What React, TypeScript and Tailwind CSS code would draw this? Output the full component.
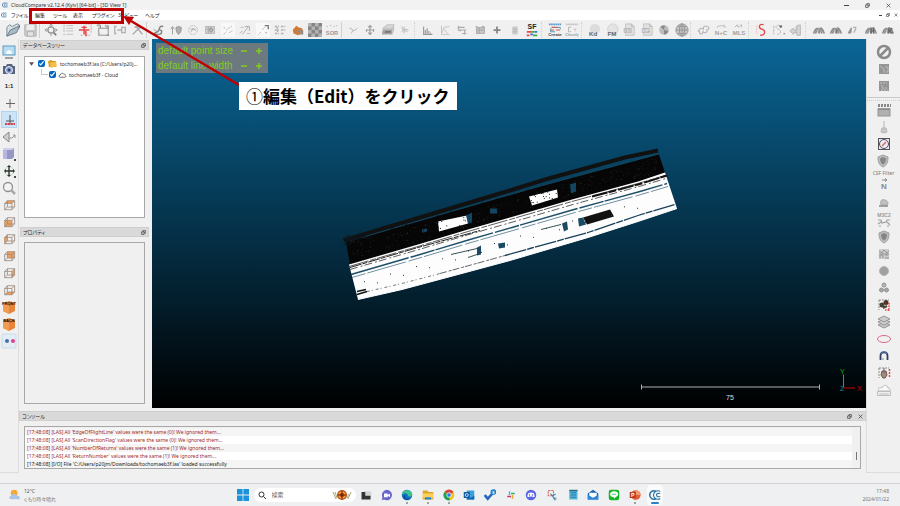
import type { ReactNode } from 'react';
import clsx from 'clsx';

const uiFont = "font-['Noto_Sans','Noto_Sans_CJK_JP',sans-serif]";

const G = '#949494';
const L = '#bdbdbd';

function Glyph({ children, className = 'w-4 h-4' }: { children: ReactNode; className?: string }) {
  return (
    <svg viewBox="0 0 16 16" className={clsx('shrink-0', className)} fill="none" stroke={G} strokeWidth="1" aria-hidden="true">
      {children}
    </svg>
  );
}

function Label({ x = 8, y, size, fill = '#777', children }: { x?: number; y: number; size: number; fill?: string; children: ReactNode }) {
  return (
    <text x={x} y={y} fontSize={size} fill={fill} stroke="none" textAnchor="middle" fontWeight="700" fontFamily="Liberation Sans, sans-serif">
      {children}
    </text>
  );
}

interface Tool {
  name: string;
  icon: ReactNode;
  active?: boolean;
  caption?: string;
}

const pageIcon = (text: string) => (
  <>
    <path d="M4 1h7l3 3v10H4z" fill="#e0e0e0" stroke="#c4c4c4" />
    <path d="M11 1v3h3" stroke="#b5b5b5" />
    <rect x="2" y="6" width="9" height="5" fill="#adadad" stroke="none" />
    <Label x={6.5} y={10} size={4} fill="#eee">{text}</Label>
  </>
);

const ridge = (extra: ReactNode) => (
  <>
    <path d="M1 12C3 5 6 5 8 6c3-3 5 1 7 6h-2l-1-3v3h-2V8l-1 4H7V7l-2 5z" fill="#8a8a8a" stroke="none" />
    <path d="M2 12l5-6M5 12l4-6M9 6l4 6" stroke="#bbb" strokeWidth=".7" />
    {extra}
  </>
);

const cloudPath = 'M4 11C1 11 1 7 4 7c0-3 4-4 6-2 3 0 3 3 3 3 2 1 1 3-1 3z';

const toolGroups: { grow: string; wideGap?: boolean; tools: Tool[] }[] = [
  {
    grow: 'flex-[2]',
    tools: [
      {
        name: 'Open',
        icon: (
          <>
            <path d="M1 15V5l3-3 3 2 6-3 2 1v4" fill="#d9e2e6" stroke="#6d8089" />
            <path d="M1 15L5 8l11-5-4 8z" fill="#a9bcc5" stroke="#5d727d" />
          </>
        ),
      },
      {
        name: 'Save',
        icon: (
          <>
            <path d="M2 2h13v13H3l-1-1z" fill="#c9c9c9" stroke="#b0b0b0" />
            <rect x="4" y="2" width="9" height="6" fill="#ededed" stroke="none" />
            <rect x="5" y="10" width="7" height="5" fill="#e4e4e4" stroke="#b0b0b0" />
          </>
        ),
      },
    ],
  },
  {
    grow: 'flex-[6]',
    tools: [
      {
        name: 'Apply transformation',
        icon: (
          <>
            <circle cx="8" cy="8" r="3.500" strokeWidth="1.500" />
            <path d="M8 1v4M8 11v4M1 8h4M11 8h4M6 3l2-2 2 2M3 6L1 8l2 2M13 6l2 2-2 2" />
            <path d="M11 11l3 3" stroke="#777" strokeWidth="2" />
          </>
        ),
      },
      {
        name: 'Point list',
        icon: (
          <>
            <path d="M6 3h8M6 6h8M6 9h8M6 13h8" stroke={L} />
            <path d="M3 3h1M3 6h1M3 9h1M3 13h1" strokeWidth="2" stroke="#a5a5a5" />
          </>
        ),
      },
      {
        name: 'Register',
        icon: (
          <>
            <path d="M8 1h7v10M5 14H2M9 14h5" stroke="#c99" strokeDasharray="2 1" />
            <path d="M7 3v10M1 8h12M4 5h6M9 9v6" stroke="#e5484a" strokeWidth="1.700" />
          </>
        ),
      },
      {
        name: 'Clone',
        icon: (
          <>
            <rect x="3" y="6" width="11" height="8" stroke="#aaa" strokeWidth="1.500" />
            <path d="M1 3h4v3M11 4h3v3M12 14h3" strokeWidth="1.500" />
            <path d="M1 2h4M10 3h4M2 12h3" stroke={L} strokeWidth="2" />
          </>
        ),
      },
      { name: 'Merge', icon: <path d="M4 4H2v8h2M5 8h5M10 5h4v6h-4z" strokeWidth="1.500" stroke="#b0b0b0" /> },
      { name: 'Delete', icon: <path d="M2 13L11 4M6 4l7 9M4 5c4-2 4-2 8 1" strokeWidth="1.500" stroke="#a5a5a5" /> },
    ],
  },
  {
    grow: 'flex-[11]',
    tools: [
      {
        name: 'Sample points',
        icon: (
          <>
            <path d="M3 13c2-4 5-1 6-5s2-5 5-4M2 13h8c3-1 3-5 0-5" stroke="#858585" strokeWidth="1.700" />
            <path d="M3 7l4 3" stroke={G} />
          </>
        ),
      },
      {
        name: 'Normals',
        icon: (
          <>
            <path d="M4 13V5M2 7l2-3 2 3" />
            <path d="M8 5l3-1 3 1c0 5-1 6-3 8-2-2-3-3-3-8z" fill="#b0b0b0" />
          </>
        ),
      },
      {
        name: 'Octree',
        icon: (
          <>
            <circle cx="8" cy="8" r="5" stroke="#b5b5b5" strokeDasharray="2 1" />
            <path d="M6 10l2-4 3 3M5 7h6" stroke="#aaa" />
          </>
        ),
      },
      {
        name: 'Mesh',
        icon: (
          <>
            <rect x="3" y="4" width="10" height="8" fill="#d0d0d0" stroke="#b5b5b5" />
            <path d="M6 4v8M9 4v8M4 7h8" stroke="#aaa" />
            <circle cx="9" cy="8" r="2" />
          </>
        ),
      },
      {
        name: 'Cloud to cloud',
        icon: (
          <>
            <rect x="0" y="0" width="16" height="16" fill="#f8f8f8" stroke="none" />
            <path d="M3 13l3-3M6 8l7-5M9 11l4-2M3 5l2 1" stroke="#aaa" strokeDasharray="2 1" />
          </>
        ),
      },
      {
        name: 'Cloud to mesh',
        icon: (
          <>
            <path d="M2 12l3-3M5 13l7-9M8 4h5v5" stroke="#a5a5a5" />
            <path d="M3 5h4M10 12h4" stroke={L} />
          </>
        ),
      },
      {
        name: 'Align',
        icon: (
          <>
            <rect x="-2" y="-2" width="20" height="20" fill="#f9f9f9" stroke="none" />
            <path d="M2 14l4-4M7 8l4-4" strokeDasharray="1 1" />
            <path d="M10 3h4v4M11 11h1" stroke="#777" strokeWidth="1.500" />
          </>
        ),
      },
      { name: 'Statistics', icon: <path d="M2 4h5M2 8h4M2 12h5M4 4l2 4-2 4M9 4h5M9 8h5M9 12h4" stroke="#b0b0b0" strokeDasharray="3 1" strokeWidth="1.500" /> },
      {
        name: 'Label components',
        icon: (
          <>
            <path d="M2 8l4-5 3 2 4 1v5l-5 3-5-2z" fill="#cf7a39" stroke="none" />
            <path d="M8 8h6v5H9z" fill="#9c8a7c" stroke="none" />
          </>
        ),
      },
      {
        name: 'Segment',
        icon: (
          <>
            <rect width="16" height="16" fill="#b4b4b4" stroke="none" />
            <path d="M4 0h4v4H4zM12 0h4v4h-4zM0 4h4v4H0zM8 4h4v4H8zM4 8h4v4H4zM12 8h4v4h-4zM0 12h4v4H0zM8 12h4v4H8z" fill="#858585" stroke="none" />
          </>
        ),
      },
      {
        name: 'SOR filter',
        icon: (
          <>
            <path d="M2 4h1M6 3h1M10 4h1M13 3h1" />
            <Label y={14} size={6.5} fill="#999">SOR</Label>
          </>
        ),
      },
    ],
  },
  {
    grow: 'flex-[4]',
    tools: [
      { name: 'Cut', icon: <path d="M5 6l4 3 4-3M8 8l-2 4M4 6h2" stroke="#b0b0b0" /> },
      { name: 'Translate', icon: <path d="M8 3v10M4 8h9M6 5l2-2 2 2M6 11l2 2 2-2M4 7v3M12 7v3" stroke="#999" strokeWidth="1.300" /> },
      {
        name: 'Cross section',
        icon: (
          <>
            <path d="M2 6l5-4h8l-2 4z" fill="#d8d8d8" stroke="#bbb" />
            <path d="M2 7h11v6H1z" fill="#a5a5a5" stroke="none" />
            <path d="M13 6l2-4v6l-2 5z" fill="#bdbdbd" stroke="none" />
            <path d="M5 9h6v2H4z" fill="#757575" stroke="none" />
          </>
        ),
      },
      { name: 'Trace', icon: <path d="M4 4l2 4 5 2M7 4v8M4 10l4-3 4 1" stroke="#b5b5b5" /> },
    ],
  },
  {
    grow: 'flex-[7]',
    wideGap: true,
    tools: [
      { name: 'Histogram', icon: <path d="M3 4v9h10M5 12V8M7 12V6M9 12V9M11 12v-1" stroke="#999" strokeWidth="1.300" /> },
      { name: 'Curve', icon: <path d="M4 3v10h9M4 12l3-7 6-1M6 6l5 6" stroke="#c0c0c0" /> },
      { name: 'Filter range', icon: <path d="M3 5h8M3 8h10M8 12h5M4 3v4M11 8v5M4 8l3 1" stroke="#aaa" strokeWidth="1.300" /> },
      {
        name: 'Scalar grid',
        icon: (
          <>
            <rect x="4" y="5" width="9" height="7" fill="#c5c5c5" stroke="#aaa" />
            <path d="M3 4h2M10 4h3M7 5v7M4 8h9" stroke="#a5a5a5" />
          </>
        ),
      },
      { name: 'Add scalar field', icon: <path d="M8 4v8M4 8h8" stroke="#858585" strokeWidth="2" /> },
      { name: 'Remove scalar field', icon: <><rect x="5" y="4" width="6" height="9" fill="#cacaca" stroke="none" /><path d="M5 7h6M5 10h6" stroke="#b5b5b5" /></> },
      {
        name: 'Scalar field arithmetic',
        icon: (
          <>
            <Label y={7} size={8} fill="#222">SF</Label>
            <path d="M2 10h5M2 14h3" stroke="#e34b3f" strokeWidth="2" />
            <path d="M7 10h4M9 14h5" stroke="#3fae4a" strokeWidth="2" />
            <path d="M11 10h3M6 13h3" stroke="#3277cc" strokeWidth="2" />
          </>
        ),
      },
    ],
  },
  {
    grow: 'flex-[2]',
    wideGap: true,
    tools: [
      {
        name: 'Canupo create',
        icon: (
          <>
            <path d="M1 1.500h14" stroke="#5a9cd0" strokeWidth="2" strokeDasharray="2 .5" />
            <path d="M4 5h7M3 8h4M9 8h5" stroke="#cc5e55" strokeWidth="1.300" />
            <path d="M3 6v4h5M10 5h4v2" stroke="#4b8cae" />
            <Label y={15} size={5} fill="#444">Create</Label>
          </>
        ),
      },
      {
        name: 'Canupo classify',
        icon: (
          <>
            <path d="M1 1.500h14" stroke="#c4c4c4" strokeWidth="2" strokeDasharray="2 .5" />
            <path d="M4 5h3M4 5v5h3M10 7h3M11 9h1" stroke="#b0b0b0" />
            <Label y={15} size={4} fill="#999">Classify</Label>
          </>
        ),
      },
    ],
  },
  {
    grow: 'flex-[6]',
    wideGap: true,
    tools: [
      { name: 'Kd', icon: <><circle cx="9" cy="7" r="6" fill="#dcdcdc" stroke="none" /><Label x={7} y={15} size={7} fill="#666">Kd</Label></> },
      { name: 'FM', icon: <><circle cx="9" cy="7" r="6" fill="#e3e3e3" stroke="#d0d0d0" /><Label x={8} y={15} size={7} fill="#666">FM</Label></> },
      { name: 'Export CSV', icon: pageIcon('CSV') },
      { name: 'Import CSV', icon: pageIcon('SHP') },
      {
        name: 'Facets',
        icon: (
          <>
            <circle cx="8" cy="8" r="5.500" fill="#bdbdbd" stroke="none" />
            <path d="M8 8L4 4c3-2 5-1 5-1zM8 8l5 1c-1 3-3 4-5 4z" fill="#888" stroke="none" />
          </>
        ),
      },
      {
        name: 'Stereogram',
        icon: (
          <>
            <circle cx="8" cy="8" r="7" fill="#c5c5c5" />
            <ellipse cx="8" cy="8" rx="3" ry="7" />
            <path d="M8 1v14M1 8h14M3 4h10M3 12h10" />
          </>
        ),
      },
    ],
  },
  {
    grow: 'flex-[3]',
    wideGap: true,
    tools: [
      { name: 'HPR', icon: <path d="M3 8c0-3 3-2 4-1 0-4 3-4 4-3 4 0 3 4 0 4 2 3-3 4-4 2-1 4-5 3-4 0-2 0-2-2 0-2z" stroke="#b5b5b5" strokeWidth="1.300" /> },
      { name: 'Normals and curvature', icon: <><path d="M3 5c4-3 8-2 10 0M11 2l2 3" stroke="#b5b5b5" /><Label y={14} size={7} fill="#a0a0a0">N+C</Label></> },
      { name: 'MLS', icon: <><path d="M3 5l3-3 1 3 4-3v3" stroke="#b5b5b5" /><Label y={14} size={7} fill="#a0a0a0">MLS</Label></> },
    ],
  },
  {
    grow: 'flex-[3]',
    wideGap: true,
    tools: [
      {
        name: 'Polyline',
        icon: (
          <>
            <path d="M11 2C5 0 5 6 9 7s5 7-2 7" stroke="#e04a4a" strokeWidth="1.500" />
            <path d="M3 3v10" stroke="#e99" strokeDasharray="1 1" />
          </>
        ),
      },
      {
        name: 'Rasterize contour',
        icon: (
          <>
            <path d="M9 3C4 1 3 6 7 7s4 6-1 6M2 3v10" stroke="#b0b0b0" strokeDasharray="3 1" />
            <circle cx="10" cy="4" r="1.500" fill="#666" stroke="none" />
            <circle cx="14" cy="12" r="1" fill="#999" stroke="none" />
          </>
        ),
      },
      { name: 'Unroll', icon: <path d="M1 9l4-3v2h4V3l4-1v12h-4v-3H5v2zM8 4v8" fill="#d5d5d5" stroke="#b5b5b5" /> },
    ],
  },
  {
    grow: 'flex-[5]',
    wideGap: true,
    tools: [
      { name: 'Ridge view', icon: ridge(null) },
      { name: 'Ridge section', icon: ridge(<path d="M9 7v5" stroke="#666" />) },
      { name: 'Ridge query', icon: <><path d="M2 12C4 6 6 5 7 5l-1 7z" fill={G} stroke="none" /><path d="M8 5h3v2l-2 4" stroke="#b0b0b0" strokeWidth="1.500" /></> },
      { name: 'Ridge H', icon: ridge(<path d="M8 5v7M11 5v7M8 9h3" stroke="#666" strokeWidth="1.500" />) },
      { name: 'Ridge K', icon: ridge(<path d="M9 5v7M13 6l-3 3 3 3" stroke="#666" strokeWidth="1.500" />) },
    ],
  },
];

type Face = 'top' | 'front' | 'left' | 'back' | 'right' | 'bottom';

const facePaths: Record<Face, string> = {
  top: 'M3 6l3-3h8l-3 3z',
  front: 'M3 6h8v7H3z',
  left: 'M3 6l3-3v7l-3 3z',
  back: 'M6 3h8v7H6z',
  right: 'M11 6l3-3v7l-3 3z',
  bottom: 'M3 13l3-3h8l-3 3z',
};

const cube = (face: Face) => (
  <g transform="translate(1 1) scale(.9)">
    <path d={facePaths[face]} fill="#f0a05a" stroke="none" />
    <path d="M3 6h8v7H3zM6 3h8v7H6zM3 6l3-3M11 6l3-3M3 13l3-3M11 13l3-3" stroke="#9a8a7e" strokeWidth=".9" />
  </g>
);

const isoBox = (text: string) => (
  <>
    <path d="M2 4l6-2 6 2v8l-6 3-6-3z" fill="#e9853a" stroke="none" />
    <path d="M2 4l6 3v8l-6-3z" fill="#f39b55" stroke="none" />
    <path d="M8 7l6-3" stroke="#b96423" strokeWidth=".6" />
    <Label y={5.5} size={4} fill="#111">{text}</Label>
  </>
);

const viewTools: Tool[] = [
  {
    name: 'Display settings',
    icon: (
      <>
        <rect x="2" y="2" width="12" height="9" fill="#b8ddf0" stroke="#5a9cc0" />
        <path d="M5 10c0-5 6-5 6 0z" fill="#f6fbfd" stroke="none" />
        <path d="M4 14h8" stroke="#888" strokeWidth="1.500" />
      </>
    ),
  },
  {
    name: 'Snapshot',
    icon: (
      <>
        <path d="M2 5h3l1-2h5l1 2h2v8H2z" fill="#59647c" stroke="none" />
        <circle cx="8" cy="9" r="3.500" fill="#8ba2d4" stroke="#e3e8f2" />
        <circle cx="8" cy="9" r="1.500" fill="#34416a" stroke="none" />
      </>
    ),
  },
  { name: 'Zoom 1:1', icon: <Label y={10} size={6} fill="#222">1:1</Label> },
  { name: 'Set pivot', icon: <path d="M9 4v9M5 8.500h9" stroke="#666" /> },
  {
    name: 'Auto pivot',
    active: true,
    icon: (
      <>
        <path d="M9 3v9M5 9h8" stroke="#555" />
        <path d="M4 12h10" stroke="#d2495a" strokeWidth="2" strokeDasharray="2.500 .4" />
      </>
    ),
  },
  { name: 'Level', icon: <><path d="M2 8l6-5v10z" fill="#cfcfcf" stroke="#888" /><path d="M8 9h3l3-3M12 6h2v3" /></> },
  {
    name: 'Perspective',
    icon: (
      <>
        <path d="M2 3l3-1h8v9l-2 2H2z" fill="#9797c6" stroke="none" />
        <path d="M2 3l3-1h8l-2 2H2z" fill="#d0d0ee" stroke="none" />
        <path d="M2 4h4v9H2z" fill="#b6b6df" stroke="none" />
        <path d="M14 13v2" stroke="#111" strokeWidth="1.500" />
      </>
    ),
  },
  {
    name: 'Rotation mode',
    icon: (
      <>
        <circle cx="8" cy="8" r="4.500" stroke="#b9dfc6" />
        <path d="M8 4v8M4 8h8" stroke="#333" strokeWidth="1.400" />
        <path d="M8 2l2 2H6zM8 14l2-2H6zM3 8l2-2v4zM14 8l-2-2v4z" fill="#333" stroke="none" />
        <path d="M14 13v2" stroke="#111" strokeWidth="1.500" />
      </>
    ),
  },
  { name: 'Zoom', icon: <><circle cx="7" cy="7" r="4.500" fill="#f3f3f3" stroke="#909090" strokeWidth="1.300" /><path d="M10 10l4 4" stroke="#aaa" strokeWidth="2.500" /></> },
  { name: 'Top view', icon: cube('top') },
  { name: 'Front view', icon: cube('front') },
  { name: 'Left view', icon: cube('left') },
  { name: 'Back view', icon: cube('back') },
  { name: 'Right view', icon: cube('right') },
  { name: 'Bottom view', icon: cube('bottom') },
  { name: 'Isometric front', icon: isoBox('FRONT') },
  { name: 'Isometric back', icon: isoBox('BACK') },
  {
    name: 'Stereo mode',
    icon: (
      <>
        <rect x="1" y="1" width="14" height="14" rx="1" fill="#e2edf5" stroke="#c9dbe8" />
        <circle cx="6" cy="8" r="2" fill="#4a6fa8" stroke="none" />
        <circle cx="12" cy="8" r="2" fill="#e0408c" stroke="none" />
      </>
    ),
  },
];

const shaderTools: Tool[] = [
  { name: 'No filter', icon: <><circle cx="8" cy="8" r="6" strokeWidth="2.500" stroke="#8a8a8a" /><path d="M4.500 11.500l7-7" strokeWidth="2.500" stroke="#8a8a8a" /></> },
  { name: 'EDL shader', icon: <><rect x="3" y="3" width="10" height="10" fill="#959595" stroke="none" /><path d="M4 5l4 3v4M9 6h3v5h-2" stroke="#bdbdbd" /></> },
  { name: 'SSAO shader', icon: <><rect x="3" y="3" width="10" height="10" fill="#959595" stroke="none" /><path d="M4 5h7M6 7v3h5M5 12h7" stroke="#c4c4c4" strokeDasharray="2 1" /></> },
];

const shield = (
  <>
    <path d="M8 2l5 2c0 5-1 8-5 10-4-2-5-5-5-10z" fill="#bbb" stroke="#a0a0a0" />
    <path d="M8 4l3 1.500c0 3-1 5-3 6-2-1-3-3-3-6z" fill="#858585" stroke="none" />
  </>
);

const frame = <path d="M3 3h10M3 3v10" stroke="#888" strokeDasharray="2 1" />;

const pluginTools: Tool[] = [
  {
    name: 'Animation',
    icon: (
      <>
        <rect x="2" y="7" width="12" height="7" fill="#b0b0b0" />
        <path d="M2 3.500h13" stroke="#888" strokeWidth="3" strokeDasharray="2 1" />
        <path d="M2 7h12" stroke="#777" />
      </>
    ),
  },
  { name: 'Broom', icon: <><path d="M8 2v7" stroke="#b5b5b5" /><path d="M6 9h4l1 4-4 1-2-1z" fill="#c9c9c9" stroke="#b5b5b5" /></> },
  { name: 'Compass', icon: <><rect x="2.500" y="2.500" width="11" height="11" fill="#eceaf2" stroke="#555" /><circle cx="8" cy="8" r="4.500" stroke="#544b63" /><path d="M6 10l4-4" stroke="#cf6a4b" strokeWidth="1.300" /></> },
  { name: 'CSF Filter', icon: shield, caption: 'CSF Filter' },
  { name: 'Hough normals', icon: <><path d="M6 2h5M9 .5L11 2 9 3.500" stroke="#888" /><Label y={11} size={8} fill="#888">N</Label></> },
  { name: 'Masonry', icon: <><path d="M5 10c-1-5 1-6 4-5s4 4 2 5z" fill="#c0c0c0" stroke="#aaa" /><path d="M3 11h9" stroke="#888" strokeWidth="1.500" /></> },
  { name: 'M3C2', icon: <><Label y={5} size={5} fill="#999">M3C2</Label><path d="M2 8h3l1 3 4-1 1-2h3M2 12l3-2M11 10l3 3M3 14h2M11 14h2" stroke="#a0a0a0" strokeWidth="1.200" /></> },
  { name: 'PCV', icon: shield },
  { name: 'Poisson', icon: <><rect x="3" y="3" width="10" height="10" fill="#ccc" stroke="none" /><path d="M3 5l3 2 2-3 3 3 2-2M4 12V9h3v3M9 9h3M9 12h4M3 8h10" /></> },
  { name: 'RANSAC', icon: <circle cx="8" cy="8" r="4.500" fill="#a0a0a0" stroke="#b5b5b5" /> },
  { name: 'SRA', icon: <><circle cx="8" cy="5" r="2" fill="#b5b5b5" /><circle cx="5.500" cy="10" r="2" fill="#a5a5a5" /><circle cx="10.500" cy="10" r="2" fill="#a5a5a5" /></> },
  {
    name: 'Tree segmentation',
    icon: (
      <>
        {frame}
        <circle cx="10" cy="5.500" r="2.500" fill="#54342a" stroke="none" />
        <circle cx="6" cy="8" r="2.500" fill="#443" stroke="none" />
        <path d="M7 11l4-2" stroke="#543" strokeWidth="2" />
        <path d="M13 6v8M9 13h5" stroke="#e04545" strokeDasharray="1.500 1" strokeWidth="1.500" />
      </>
    ),
  },
  { name: 'Layers', icon: <><path d="M2 11l6 3 6-3-6-3z" fill="#c5c5c5" /><path d="M2 8l6 3 6-3-6-3z" fill="#d0d0d0" /><path d="M2 5l6 3 6-3-6-3z" fill="#ccc" /></> },
  { name: 'Ellipse fit', icon: <ellipse cx="8" cy="8" rx="6.500" ry="3.500" stroke="#d9697f" /> },
  { name: 'Magnet', icon: <><path d="M4.500 12V8c0-5 7-5 7 0v4" stroke="#343c5c" strokeWidth="1.800" /><path d="M5 6c1-3 5-3 6 0" stroke="#5f8fd8" /><path d="M7 10v2" stroke="#888" /></> },
  {
    name: 'Sensor',
    icon: (
      <>
        {frame}
        <path d="M6 6h4l1 4-2 3H7l-2-3z" fill="#a08c7e" stroke="#6d5548" />
        <path d="M8 3v5" stroke="#666" />
        <path d="M13.500 4v9" stroke="#e04545" strokeDasharray="2 1" strokeWidth="1.500" />
      </>
    ),
  },
  { name: 'Cloud layers', icon: <><path d="M3 9C1 5 5 5 6 6c1-4 6-3 6 0 3 0 2 3 2 3z" stroke="#bdbdbd" fill="#f7f7f7" /><path d="M1.500 9.500h13v4h-13zM3 12h10" stroke="#bdbdbd" /></> },
];

function ToolButton({ tool, size }: { tool: Tool; size?: string }) {
  return (
    <button
      type="button"
      aria-label={tool.name}
      className={clsx('flex flex-col items-center justify-center min-w-0', tool.active && 'bg-[#cce4f7] outline outline-1 -outline-offset-1 outline-[#b0d5f0]')}
    >
      <Glyph className={size}>{tool.icon}</Glyph>
    </button>
  );
}

function VerticalTool({ tool }: { tool: Tool }) {
  return (
    <div className="flex flex-col items-center shrink-0">
      <div className="h-[17px] w-[17px] flex justify-center">
        <ToolButton tool={tool} />
      </div>
      {tool.caption && <span className="h-2 leading-2 text-[5px] text-[#777] whitespace-nowrap">{tool.caption}</span>}
    </div>
  );
}

function RestoreIcon({ className }: { className: string }) {
  return (
    <svg viewBox="0 0 8 8" className={className} fill="none" stroke="#444" strokeWidth="1.200" aria-hidden="true">
      <path d="M1 3h4v4H1zM3 3V1h4v4H5" />
    </svg>
  );
}

function CloseIcon({ className }: { className: string }) {
  return (
    <svg viewBox="0 0 8 8" className={className} stroke="#444" strokeWidth="1.200" aria-hidden="true">
      <path d="M1 1l6 6M7 1L1 7" />
    </svg>
  );
}

function AppLogo({ className }: { className: string }) {
  return (
    <svg viewBox="0 0 16 16" className={className} fill="none" stroke="#2b6f9e" strokeWidth="2" aria-hidden="true">
      <path d="M9 3C5 1 1 4 1 8s4 7 8 5" />
      <path d="M15 3c-5-2-9 1-9 5s4 7 9 5M15 6c-3-1-5 0-5 2s2 3 5 2" strokeWidth="1.500" />
    </svg>
  );
}

function DockHeader({ title, closable }: { title: string; closable?: boolean }) {
  return (
    <div className="h-2.5 shrink-0 flex items-center gap-1 px-0.5 bg-[#d9d9d9] border border-[#cfcfcf]">
      <h2 className="flex-1 text-[5px] leading-2 text-[#222] [font-feature-settings:'palt']">{title}</h2>
      <button type="button" aria-label={`Float ${title}`}><RestoreIcon className="w-[5px] h-[5px]" /></button>
      {closable && (
        <button type="button" aria-label={`Close ${title}`} className="ml-0.5"><CloseIcon className="w-[5px] h-[5px]" /></button>
      )}
    </div>
  );
}

const menuItems = [
  { label: 'ファイル', width: 'w-6' },
  { label: '編集', width: 'w-[18px]' },
  { label: 'ツール', width: 'w-5' },
  { label: '表示', width: 'w-[19px]' },
  { label: 'プラグイン', width: 'w-[26px]' },
  { label: '3Dビュー', width: 'w-[27px]' },
  { label: 'ヘルプ', width: 'w-5' },
];

function TitleBar() {
  return (
    <>
      <header className="h-2.5 shrink-0 flex items-center pl-0.5 pr-[9px] bg-[#f2f2f2]">
        <AppLogo className="w-[6px] h-[6px] mr-[3px]" />
        <h1 className="flex-1 text-[5px] leading-2 text-[#333]">CloudCompare v2.12.4 (Kyiv) [64-bit] - [3D View 1]</h1>
        <div className="flex items-center gap-4">
          <button type="button" aria-label="Minimize"><span className="block w-[5px] h-px bg-[#444]" /></button>
          <button type="button" aria-label="Restore"><RestoreIcon className="w-[5px] h-[5px]" /></button>
          <button type="button" aria-label="Close"><CloseIcon className="w-[5px] h-[5px]" /></button>
        </div>
      </header>
      <nav className="h-2.5 shrink-0 flex items-center pl-px pr-0.5 bg-white">
        <AppLogo className="w-[6px] h-[6px] mr-1" />
        {menuItems.map(item => (
          <button
            key={item.label}
            type="button"
            className={clsx("text-left whitespace-nowrap text-[5px] leading-2 text-[#222] [font-feature-settings:'palt']", item.width)}
          >
            {item.label}
          </button>
        ))}
        <div className="ml-auto flex items-center gap-1">
          <button type="button" aria-label="Minimize view"><span className="block w-[3px] h-px bg-[#444]" /></button>
          <button type="button" aria-label="Restore view"><RestoreIcon className="w-1 h-1" /></button>
          <button type="button" aria-label="Close view"><CloseIcon className="w-1 h-1" /></button>
        </div>
      </nav>
    </>
  );
}

function MainToolbar() {
  return (
    <div role="toolbar" aria-label="Main tools" className="h-[19px] shrink-0 flex items-center pl-1 pr-[3px] bg-[#f0f0f0]">
      {toolGroups.map((group, i) => (
        <div key={group.grow + i} className="contents">
          {i > 0 && (
            <span className={clsx('h-4 shrink-0 border-l border-[#d0d0d0]', group.wideGap ? 'w-[5px] border-dotted' : 'w-[3px]')} />
          )}
          <div className={clsx('flex min-w-0', group.grow)}>
            {group.tools.map(tool => (
              <div key={tool.name} className="flex-1 min-w-0 flex justify-center">
                <ToolButton tool={tool} size="w-3.5 h-3.5" />
              </div>
            ))}
          </div>
        </div>
      ))}
    </div>
  );
}

function TreePanel() {
  return (
    <div className="w-[133px] shrink-0 flex flex-col pt-px pl-px pr-[3px] pb-1">
      <DockHeader title="データベースツリー" />
      <div className="flex-1 mt-1.5 mb-[9px] ml-1 mr-1 border border-[#a8a8a8] bg-white text-[5px] leading-2 text-[#333]">
        <div className="flex items-center pl-1 pt-px h-3">
          <svg viewBox="0 0 6 4" className="w-[5px] h-1 mr-1" aria-hidden="true"><path d="M0 0h6L3 4z" fill="#6a4a4a" /></svg>
          <input type="checkbox" defaultChecked id="node-file" className="w-[7px] h-[7px] accent-[#0067c0]" />
          <svg viewBox="0 0 10 9" className="w-[9px] h-2 mx-[3px]" aria-hidden="true">
            <path d="M0 1l4-1 1 1h4v7H1z" fill="#d9981e" />
            <path d="M2 3l7-1 1 5-7 2z" fill="#f5c04a" />
          </svg>
          <label htmlFor="node-file" className="whitespace-nowrap">tochomaeb3f.las (C:/Users/p20j...</label>
        </div>
        <div className="flex items-center pl-4 h-[11px]">
          <span className="w-[7px] h-1.5 -mt-1.5 mr-px border-l border-b border-[#c8c8c8]" />
          <input type="checkbox" defaultChecked id="node-cloud" className="w-[7px] h-[7px] accent-[#0067c0]" />
          <svg viewBox="0 0 16 14" className="w-[9px] h-2 mx-0.5" fill="#fff" stroke="#555" strokeWidth="1.500" aria-hidden="true">
            <path d={cloudPath} />
          </svg>
          <label htmlFor="node-cloud" className="whitespace-nowrap">tochomaeb3f - Cloud</label>
        </div>
      </div>
      <DockHeader title="プロパティ" />
      <div className="flex-1 mt-[5px] mx-1 border border-[#a8a8a8]" />
    </div>
  );
}

// small LCG so that the point scatter stays the same between renders
function scatter(count: number, seed: number) {
  let s = seed;
  const next = () => {
    s = (s * 1664525 + 1013904223) % 4294967296;
    return s / 4294967296;
  };
  return Array.from({ length: count }, () => ({ u: next(), v: next(), w: next() }));
}

// centre line between the dark and the bright half of the road
const seam = [[349, 264], [418, 244], [468, 229], [510, 217], [572, 199], [638, 181], [665, 173]];

function seamY(x: number) {
  for (let i = 1; i < seam.length; i++) {
    const [x0, y0] = seam[i - 1];
    const [x1, y1] = seam[i];
    if (x <= x1 || i === seam.length - 1) {
      return y0 + ((x - x0) / (x1 - x0)) * (y1 - y0);
    }
  }
  return seam[0][1];
}

function line(dx: number, dy: number) {
  return seam.map(([x, y]) => `${x + dx},${y + dy}`).join(' ');
}

function PointCloud() {
  const lowerEdge = '358,299 402,289 458,274 510,260 588,237 638,221 677,208';
  return (
    <svg viewBox="152 39 714 368" className="absolute inset-0 w-full h-full" fill="none" aria-label="Point cloud">
      <polygon points="346,242 400,226 470,206 540,186 600,170 659,154 665,172 638,182 572,200 510,218 468,229 418,244 350,264" fill="#060606" />
      <polyline points="344,240 370,232 430,214 510,190 545,179 585,168 625,157 658,150" stroke="#111" strokeWidth="4" />
      <polyline points="362,237 430,217 510,194 585,173 659,153" stroke="#174257" strokeWidth="1" strokeDasharray="30 3 12 2" />
      <polygon points="349,264 418,244 468,229 510,217 572,199 638,181 665,172 671,190 677,208 638,221 588,237 510,260 458,274 402,289 358,299" fill="#fdfdfd" />

      <polyline points={line(0, 2)} stroke="#333" strokeWidth=".8" strokeDasharray="20 2 6 1" />
      <polyline points={line(1, 5)} stroke="#333" strokeWidth=".8" strokeDasharray="8 3 2 2" />
      <polyline points="350,267 418,247 480,230" stroke="#222" strokeWidth="1" strokeDasharray="12 1 5 1" />
      <polyline points="592,196 638,184 667,175" stroke="#111" strokeWidth="2" strokeDasharray="16 1 8 2" />
      <polyline points={line(2, 10)} stroke="#1d4d68" strokeWidth="1.400" strokeDasharray="60 2 25 1" />
      <polyline points={line(3, 13)} stroke="#4b7388" strokeWidth=".8" strokeDasharray="14 2 40 3" />
      <polyline points="363,292 402,283 440,273" stroke="#777" strokeWidth="1" strokeDasharray="1 3 3 2" />
      <polyline points="440,273 480,262 505,255" stroke="#666" strokeWidth="1" strokeDasharray="7 2 3 1" />
      <polyline points="505,255 530,248 588,232 638,215 675,204" stroke="#153f59" strokeWidth="1.300" strokeDasharray="22 1 7 1" />
      <path d="M357 291l9-2M357 294l10-3" stroke="#111" strokeWidth="1.500" />
      <polyline points={lowerEdge} stroke="#fff" strokeWidth="1" />

      <path d="M438 221l29-6 1 8-29 8zM529 196l28-7 1 8-26 8z" fill="#fff" />
      <path d="M466 215l6-3v10l-4 1zM570 184l6-2v9l-5 2zM490 208h7v5h-7zM422 229l5-1v3l-5 1z" fill="#134663" />
      <path d="M583 217l27-8 4 7-27 8z" fill="#111" />
      <path d="M578 218l5-1 3 7-7 2zM562 223l5-2 1 8-4 2zM477 247l4-2v9l-4 1zM498 243l7-1v5l-6 1z" fill="#1c4a64" />
      <path d="M451 254l26-6M468 257l9-3M541 229l20-5" stroke="#355" strokeWidth="1" />

      {scatter(220, 7).map(({ u, v, w }, i) => {
        const x = 352 + u * 304;
        return <rect key={`d${i}`} x={x} y={seamY(x) - 4 - v * 15} width="1" height="1" fill={w > 0.7 ? '#332e2a' : '#1b1b1a'} />;
      })}
      {scatter(50, 21).map(({ u, v }, i) => (
        <rect key={`e${i}`} x={341 + u * 30} y={236 + v * 9 - u * 7} width="2" height="1" fill="#10181c" />
      ))}
      {Array.from({ length: 22 }, (_, i) => {
        const x = 364 + i * 13;
        return <rect key={`w${i}`} x={x} y={seamY(x) + 21 + (i % 2) * 5} width="1" height="1" fill="#333" />;
      })}

      <path d="M641.500 384v5M641 386.500h178M819.500 384v5" stroke="#b0b0b0" />
      <text x="730" y="399" fontSize="7" fill="#ddd" textAnchor="middle" fontFamily="Liberation Sans, sans-serif">75</text>
      <path d="M843.500 374v13" stroke="#0c0" />
      <path d="M843 387.500h12" stroke="#c00" />
      <text x="840" y="373" fontSize="7" fill="#0b0" fontFamily="Liberation Sans, sans-serif">Y</text>
      <text x="857" y="390" fontSize="7" fill="#c00" fontFamily="Liberation Sans, sans-serif">X</text>
      <text x="840" y="390" fontSize="7" fill="#188a9a" fontFamily="Liberation Sans, sans-serif">Z</text>
    </svg>
  );
}

function Viewport() {
  return (
    <main className="relative flex-1 min-w-0 bg-linear-to-b/srgb from-[#0a6697] to-black">
      <PointCloud />
      <div className="absolute left-1 top-1 w-28 h-[30px] px-0.5 bg-[#6c7a80] text-[#83cc1c] font-['Liberation_Sans',sans-serif] text-[10px] leading-[15px]">
        {['default point size', 'default line width'].map(label => (
          <div key={label} className="flex items-center">
            <span className="flex-1 whitespace-nowrap">{label}</span>
            <button type="button" aria-label={`Decrease ${label}`} className="w-[15px] flex justify-center">
              <svg viewBox="0 0 8 8" className="w-2 h-2" stroke="currentColor" strokeWidth="1.500"><path d="M1 4h6" /></svg>
            </button>
            <button type="button" aria-label={`Increase ${label}`} className="w-[15px] flex justify-center">
              <svg viewBox="0 0 8 8" className="w-2 h-2" stroke="currentColor" strokeWidth="1.500"><path d="M1 4h6M4 1v6" /></svg>
            </button>
          </div>
        ))}
      </div>
    </main>
  );
}

const logLines = [
  { text: "[17:48:08] [LAS] All 'EdgeOfFlightLine' values were the same (0)! We ignored them...", warning: true },
  { text: "[17:48:08] [LAS] All 'ScanDirectionFlag' values were the same (0)! We ignored them...", warning: true },
  { text: "[17:48:08] [LAS] All 'NumberOfReturns' values were the same (1)! We ignored them...", warning: true },
  { text: "[17:48:08] [LAS] All 'ReturnNumber' values were the same (1)! We ignored them...", warning: true },
  { text: "[17:48:08] [I/O] File 'C:/Users/p20jm/Downloads/tochomaeb3f.las' loaded successfully", warning: false },
];

function Console() {
  return (
    <section className="shrink-0 pt-[3px] pb-1">
      <DockHeader title="コンソール" closable />
      <div className="mt-[5px] mx-[5px] flex border border-[#a8a8a8] bg-[#f0f0f0]">
        <ul className="flex-1 pt-px text-[5px] leading-2">
          {logLines.map(entry => (
            <li key={entry.text} className={clsx('pl-0.5 odd:bg-[#f5f5f5] even:bg-white', entry.warning ? 'text-[#a02c2c]' : 'text-[#222]')}>
              {entry.text}
            </li>
          ))}
        </ul>
        <div className="w-2 flex justify-center items-end pb-2">
          <span className="w-px h-2 bg-[#777]" />
        </div>
      </div>
    </section>
  );
}

interface TaskIcon {
  name: string;
  icon: ReactNode;
  running?: boolean;
}

const taskIcons: TaskIcon[] = [
  { name: 'Task view', icon: <><rect x="5" y="3" width="10" height="9" fill="#d4d4d4" stroke="none" /><path d="M2 4h5v5h7v5H2z" fill="#333" stroke="none" /></> },
  { name: 'Chat', icon: <><path d="M8 1a7 7 0 11-4 13l-3 1 1-4A7 7 0 018 1z" fill="#6a63c9" stroke="none" /><path d="M4 6h5v5H4zM9 8l3-2v5l-3-2z" fill="#fff" stroke="none" /></> },
  {
    name: 'Edge',
    running: true,
    icon: (
      <>
        <circle cx="8" cy="8" r="7" fill="#1273c8" stroke="none" />
        <path d="M1 8C2 1 14-1 15 7c0 3-5 4-6 2 1-3-4-5-8-1z" fill="#3fc48d" stroke="none" />
        <path d="M6 8c-2 4 3 6 7 4-3 4-9 3-10-1 0-3 2-3 3-3z" fill="#0c4f9e" stroke="none" />
      </>
    ),
  },
  { name: 'Explorer', running: true, icon: <><path d="M1 2h6l2 2h6v10H1z" fill="#e0a52a" stroke="none" /><path d="M1 6h14v6H1z" fill="#fbd15b" stroke="none" /><path d="M4 11h8v3H4z" fill="#2c83d0" stroke="none" /></> },
  {
    name: 'Chrome',
    running: true,
    icon: (
      <>
        <circle cx="8" cy="8" r="7" fill="#f4c20d" stroke="none" />
        <path d="M8 8L2 4a7 7 0 0112 0z" fill="#db4437" stroke="none" />
        <path d="M8 8l1 7A7 7 0 012 4z" fill="#1fa05a" stroke="none" />
        <circle cx="8" cy="8" r="3" fill="#3b78e7" stroke="#fff" />
      </>
    ),
  },
  { name: 'Outlook', icon: <><path d="M5 2h10v12H5z" fill="#37a0dd" stroke="none" /><path d="M5 9l5 3 5-3v5H5z" fill="#1066b4" stroke="none" /><rect x="1" y="4" width="8" height="8" fill="#0f5ba7" stroke="none" /><circle cx="5" cy="8" r="2" stroke="#fff" /></> },
  { name: 'To Do', icon: <><path d="M1 8l4 5 8-9" stroke="#2566bd" strokeWidth="3.500" /><circle cx="12.500" cy="4" r="3.800" fill="#2080c8" stroke="none" /><Label x={12.5} y={6} size={5} fill="#fff">8</Label></> },
  { name: 'Slack', icon: <><path d="M6 3v5" stroke="#48b8d8" strokeWidth="2" /><path d="M8 6h5" stroke="#3bac78" strokeWidth="2" /><path d="M10 8v5" stroke="#e0a92e" strokeWidth="2" /><path d="M3 10h5" stroke="#d42e5d" strokeWidth="2" /></> },
  { name: 'Discord', icon: <><circle cx="8" cy="8" r="7" fill="#5b65e4" stroke="none" /><path d="M4 6c3-2 5-2 8 0l1 4-2 1-1-1H6l-1 1-2-1z" fill="#fff" stroke="none" /><path d="M6 7v2M10 7v2" stroke="#5b65e4" strokeWidth="1.500" /></> },
  { name: 'Snipping tool', icon: <><path d="M3 2h7v7H3z" stroke="#d46b5e" strokeWidth="1.500" strokeDasharray="3 1" /><path d="M6 6l6 8M13 7l-5 2" stroke="#447fa8" strokeWidth="1.500" /><circle cx="12" cy="13" r="1.500" stroke="#447fa8" /></> },
  { name: 'Notepad', icon: <><rect x="3" y="2" width="11" height="12" fill="#55b5d6" stroke="none" /><path d="M5 5h7M5 8h7M5 11h7" stroke="#1a6d94" /><path d="M3 2h11" stroke="#2e6e86" strokeWidth="2" /></> },
  { name: 'Mail', icon: <><path d="M1 6l7-5 7 5v8H1z" fill="#1565b0" stroke="none" /><path d="M3 5h10v4l-5 3-5-3z" fill="#fff" stroke="none" /><path d="M1 8l7 4 7-4v6H1z" fill="#2c8be0" stroke="none" /></> },
  { name: 'LINE', icon: <><rect x="1" y="1" width="14" height="14" rx="3" fill="#16b52c" stroke="none" /><path d="M8 3c7 0 7 6 2 8l-2 2v-2C1 11 1 3 8 3z" fill="#fff" stroke="none" /><path d="M5 7h6" stroke="#16b52c" /></> },
  { name: 'PowerPoint', running: true, icon: <><circle cx="9" cy="8" r="6.500" fill="#e0603d" stroke="none" /><path d="M9 1.500A6.500 6.500 0 0115.500 8H9z" fill="#f09a77" stroke="none" /><rect x="1" y="4" width="8" height="8" fill="#b8391b" stroke="none" /><Label x={5} y={11} size={7} fill="#fff">P</Label></> },
];

function Taskbar() {
  return (
    <footer className="h-[23px] shrink-0 flex items-center justify-between bg-[#eff0f1] border-t border-[#d3d0d1] text-[5px] leading-2 text-[#555]">
      <div className="flex-1 flex items-center pl-2">
        <svg viewBox="0 0 16 14" className="w-3.5 h-3 mr-0.5" aria-hidden="true">
          <circle cx="7" cy="5" r="4" fill="#f6a93b" />
          <path d="M4 12C0 12 1 8 4 8c1-3 5-3 6 0 4-1 5 4 2 4z" fill="#a9c6ea" />
        </svg>
        <p>
          <span className="block">12°C</span>
          <span className="block text-[#777] [font-feature-settings:'palt']">くもり時々晴れ</span>
        </p>
      </div>
      <div className="flex items-center">
        <button type="button" aria-label="Start" className="w-[22px] flex justify-center">
          <svg viewBox="0 0 12 12" className="w-3 h-3" fill="#1a93dc" aria-hidden="true"><path d="M0 0h5.600v5.600H0zM6.400 0H12v5.600H6.400zM0 6.400h5.600V12H0zM6.400 6.400H12V12H6.400z" /></svg>
        </button>
        <div className="w-[102px] h-3.5 flex items-center rounded-full bg-white px-1">
          <svg viewBox="0 0 8 8" className="w-2 h-2 mr-1.5" fill="none" stroke="#333" aria-hidden="true"><circle cx="3.500" cy="3.500" r="2.500" /><path d="M5.500 5.500L8 8" /></svg>
          <input type="text" aria-label="検索" placeholder="検索" className="flex-1 min-w-0 h-3 text-[6px] leading-3 bg-transparent placeholder:text-[#666] outline-none" />
          <svg viewBox="0 0 20 12" className="w-5 h-3" fill="none" aria-hidden="true">
            <path d="M1 3l3 7M3 3l2 6M19 3l-3 7M17 5l-2 4" stroke="#a9a878" />
            <circle cx="10" cy="6" r="5" fill="#b8480f" />
            <circle cx="10" cy="6" r="3" stroke="#f3a13c" strokeWidth="1.500" />
            <path d="M10 2v8M6 6h8" stroke="#641f0c" />
          </svg>
        </div>
        <div className="w-[310px] flex">
          {taskIcons.map(item => (
            <button key={item.name} type="button" aria-label={item.name} className="flex-1 h-5 flex flex-col items-center pt-1">
              <Glyph className="w-3 h-3">{item.icon}</Glyph>
              {item.running && <span className="mt-px w-0.5 h-0.5 rounded-full bg-[#888]" />}
            </button>
          ))}
          <button type="button" aria-label="CloudCompare" className="flex-1 flex justify-center">
            <span className="w-4 h-5 rounded-sm bg-[#f9fbfc] flex flex-col items-center pt-1">
              <AppLogo className="w-3 h-3" />
              <span className="mt-px w-2 h-0.5 rounded-full bg-[#2b83c4]" />
            </span>
          </button>
        </div>
      </div>
      <time className="flex-1 text-right pr-[11px] text-[#777]" dateTime="2024-01-22T17:48">
        <span className="block">17:48</span>
        <span className="block">2024/01/22</span>
      </time>
    </footer>
  );
}

function Annotation() {
  return (
    <>
      <svg viewBox="0 0 260 110" className="absolute left-0 top-0 w-[260px] h-[110px] pointer-events-none" fill="none" stroke="#c00000" aria-hidden="true">
        <rect x="30.500" y="9.500" width="92" height="13" strokeWidth="3" />
        <path d="M239 85L131 21" strokeWidth="2.500" />
        <path d="M123 16l11 1-5 8z" fill="#c00000" stroke="none" />
      </svg>
      <p className="absolute left-[239px] top-[82px] w-[218px] h-7 flex items-center pl-[7px] whitespace-nowrap bg-white text-black text-[17px] leading-7 font-bold font-['Noto_Sans_CJK_JP',sans-serif]">
        <span className="font-normal">①</span>編集（Edit）をクリック
      </p>
    </>
  );
}

export default function App() {
  return (
    <div className={clsx('relative h-screen flex flex-col overflow-hidden bg-[#f0f0f0]', uiFont)}>
      <TitleBar />
      <MainToolbar />
      <div className="flex-1 min-h-0 flex">
        <div role="toolbar" aria-label="View tools" className="w-[19px] shrink-0 flex flex-col items-center pt-1 border-r border-b border-[#dcdcdc]">
          {viewTools.map(tool => <VerticalTool key={tool.name} tool={tool} />)}
        </div>
        <div className="flex-1 min-w-0 flex flex-col">
          <div className="flex-1 min-h-0 flex">
            <TreePanel />
            <Viewport />
          </div>
          <Console />
        </div>
        <div role="toolbar" aria-label="Plugins" className="w-[34px] shrink-0 flex flex-col border-l border-b border-[#dcdcdc]">
          <div className="mt-1 pb-[3px] flex flex-col items-center border-b border-[#c8c8c8]">
            {shaderTools.map(tool => <VerticalTool key={tool.name} tool={tool} />)}
          </div>
          <div className="mt-0.5 flex flex-col items-center border-t border-dotted border-[#ccc]">
            {pluginTools.map(tool => <VerticalTool key={tool.name} tool={tool} />)}
          </div>
        </div>
      </div>
      <div className="h-2.5 shrink-0" />
      <Taskbar />
      <Annotation />
    </div>
  );
}
